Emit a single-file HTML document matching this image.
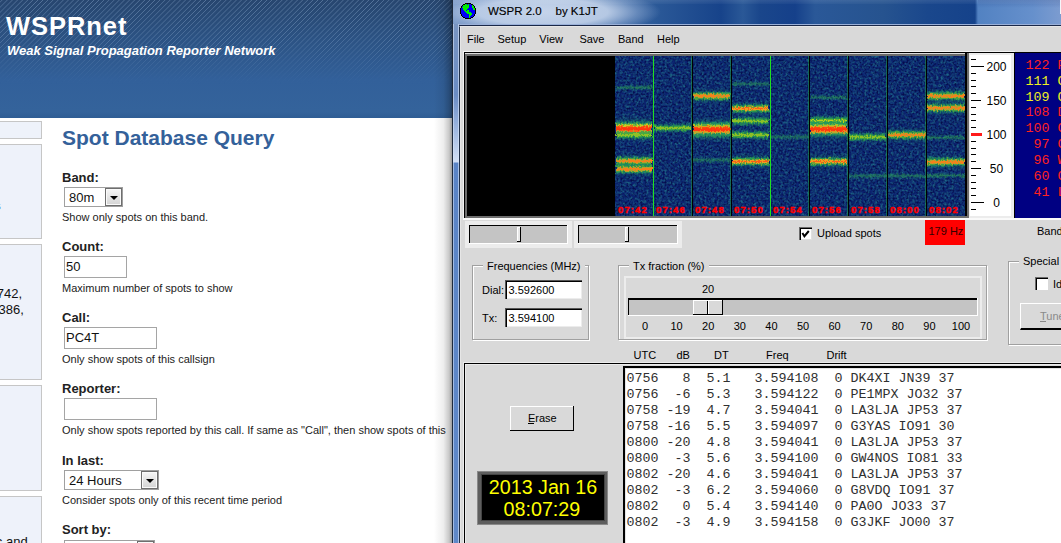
<!DOCTYPE html><html><head><meta charset="utf-8"><style>
*{margin:0;padding:0;box-sizing:border-box}
html,body{width:1061px;height:543px;overflow:hidden;background:#fff;font-family:"Liberation Sans",sans-serif}
.a{position:absolute;white-space:pre}
</style></head><body><div class="a" style="left:0px;top:0px;width:453px;height:543px;background:#fff"></div><div class="a" style="left:0px;top:0px;width:453px;height:118px;background:linear-gradient(#27466f 0px,#2c5384 40px,#32609a 80px,#34639b 112px,#2f5d94 118px)"></div><div class="a" style="left:0px;top:0px;width:453px;height:88px;background:repeating-linear-gradient(-45deg,rgba(150,180,215,0) 0px,rgba(150,180,215,0) 2.3px,rgba(150,180,215,.42) 2.9px,rgba(150,180,215,0) 3.6px);-webkit-mask-image:linear-gradient(#000 0px,rgba(0,0,0,.75) 40px,rgba(0,0,0,0) 84px)"></div><div class="a" style="left:6px;top:13.61px;font:normal bold 25.5px/25.5px 'Liberation Sans';color:#fff;letter-spacing:0.95px">WSPRnet</div><div class="a" style="left:7px;top:43.59px;font:italic bold 13px/13px 'Liberation Sans';color:#fff;">Weak Signal Propagation Reporter Network</div><div class="a" style="left:-5px;top:121px;width:47px;height:18px;background:#eef2fa;border:1px solid #c6c6c6"></div><div class="a" style="left:-5px;top:144px;width:47px;height:95px;background:#eef2fa;border:1px solid #c6c6c6"></div><div class="a" style="left:-5px;top:244px;width:47px;height:136px;background:#eef2fa;border:1px solid #c6c6c6"></div><div class="a" style="left:-5px;top:385px;width:47px;height:106px;background:#eef2fa;border:1px solid #c6c6c6"></div><div class="a" style="left:-5px;top:496px;width:47px;height:65px;background:#eef2fa;border:1px solid #c6c6c6"></div><div class="a" style="left:-6.5px;top:199.49px;font:normal bold 13px/13px 'Liberation Sans';color:#00208a;">s</div><div class="a" style="left:-3.3px;top:286.99px;font:normal normal 13px/13px 'Liberation Sans';color:#111;">742,</div><div class="a" style="left:-1.5px;top:302.99px;font:normal normal 13px/13px 'Liberation Sans';color:#111;">386,</div><div class="a" style="left:-4.2px;top:535.29px;font:normal normal 13px/13px 'Liberation Sans';color:#111;">c and</div><div class="a" style="left:62px;top:127.22px;font:normal bold 21px/21px 'Liberation Sans';color:#34619a;">Spot Database Query</div><div class="a" style="left:62px;top:170.99px;font:normal bold 13px/13px 'Liberation Sans';color:#222;">Band:</div><div class="a" style="left:62px;top:239.99px;font:normal bold 13px/13px 'Liberation Sans';color:#222;">Count:</div><div class="a" style="left:62px;top:310.99px;font:normal bold 13px/13px 'Liberation Sans';color:#222;">Call:</div><div class="a" style="left:62px;top:381.99px;font:normal bold 13px/13px 'Liberation Sans';color:#222;">Reporter:</div><div class="a" style="left:62px;top:453.99px;font:normal bold 13px/13px 'Liberation Sans';color:#222;">In last:</div><div class="a" style="left:62px;top:523.49px;font:normal bold 13px/13px 'Liberation Sans';color:#222;">Sort by:</div><div class="a" style="left:64px;top:187px;width:59px;height:20px;background:#fff;border:1px solid #a0a0a0"></div><div class="a" style="left:69px;top:190.99px;font:normal normal 13px/13px 'Liberation Sans';color:#111;">80m</div><div class="a" style="left:105px;top:188px;width:17px;height:18px;background:linear-gradient(#f6f6f6,#d4d4d4);border:1px solid #6e6e6e;box-shadow:inset 0 0 0 1px #fafafa"></div><div class="a" style="left:109.5px;top:196px;width:0;height:0;border-left:4px solid transparent;border-right:4px solid transparent;border-top:4.5px solid #000"></div><div class="a" style="left:62px;top:211.69px;font:normal normal 11px/11px 'Liberation Sans';color:#222;">Show only spots on this band.</div><div class="a" style="left:64px;top:256px;width:63px;height:22px;background:#fff;border:1px solid #a5a5a5"></div><div class="a" style="left:66px;top:260.19px;font:normal normal 13px/13px 'Liberation Sans';color:#111;">50</div><div class="a" style="left:62px;top:283.19px;font:normal normal 11px/11px 'Liberation Sans';color:#222;">Maximum number of spots to show</div><div class="a" style="left:64px;top:327px;width:93px;height:22px;background:#fff;border:1px solid #a5a5a5"></div><div class="a" style="left:66px;top:331.19px;font:normal normal 13px/13px 'Liberation Sans';color:#111;">PC4T</div><div class="a" style="left:62px;top:353.69px;font:normal normal 11px/11px 'Liberation Sans';color:#222;">Only show spots of this callsign</div><div class="a" style="left:64px;top:398px;width:93px;height:22px;background:#fff;border:1px solid #a5a5a5"></div><div class="a" style="left:62px;top:425.19px;font:normal normal 11px/11px 'Liberation Sans';color:#222;">Only show spots reported by this call. If same as &quot;Call&quot;, then show spots of this</div><div class="a" style="left:64px;top:470px;width:95px;height:20px;background:#fff;border:1px solid #a0a0a0"></div><div class="a" style="left:69px;top:473.99px;font:normal normal 13px/13px 'Liberation Sans';color:#111;">24 Hours</div><div class="a" style="left:141px;top:471px;width:17px;height:18px;background:linear-gradient(#f6f6f6,#d4d4d4);border:1px solid #6e6e6e;box-shadow:inset 0 0 0 1px #fafafa"></div><div class="a" style="left:145.5px;top:479px;width:0;height:0;border-left:4px solid transparent;border-right:4px solid transparent;border-top:4.5px solid #000"></div><div class="a" style="left:62px;top:495.19px;font:normal normal 11px/11px 'Liberation Sans';color:#222;">Consider spots only of this recent time period</div><div class="a" style="left:64px;top:540px;width:91px;height:20px;background:#fff;border:1px solid #a0a0a0"></div><div class="a" style="left:137px;top:541px;width:17px;height:18px;background:linear-gradient(#f6f6f6,#d4d4d4);border:1px solid #6e6e6e;box-shadow:inset 0 0 0 1px #fafafa"></div><div class="a" style="left:141.5px;top:549px;width:0;height:0;border-left:4px solid transparent;border-right:4px solid transparent;border-top:4.5px solid #000"></div><div class="a" style="left:434px;top:0px;width:19px;height:543px;background:linear-gradient(90deg,rgba(0,0,0,0),rgba(0,0,0,.07) 50%,rgba(0,0,0,.22) 80%,rgba(0,0,0,.45))"></div><div class="a" style="left:452px;top:0px;width:609px;height:543px;background:#1d2a3d"></div><div class="a" style="left:453px;top:0px;width:6px;height:543px;background:linear-gradient(#7e98c0 0px,#6a8cc4 95px,#90acda 120px,#d2e0f6 162px,#5a84c6 163px,#5f88c8 543px)"></div><div class="a" style="left:453px;top:0px;width:1px;height:543px;background:rgba(220,232,250,.55)"></div><div class="a" style="left:458px;top:0px;width:1px;height:543px;background:rgba(220,232,250,.6)"></div><div class="a" style="left:453px;top:0px;width:608px;height:24px;background:linear-gradient(90deg,#7393c2 0px,#6a8cc0 100px,#4a74ac 150px,#3a66a2 175px,#2a5897 205px,#17438a 268px,#2a5897 290px,#1a468b 307px,#15408a 342px,#2a5898 362px,#26538f 430px,#1a478c 475px,#15428a 522px,#5282c2 525px,#6690cc 580px,#7c9cd0 608px)"></div><div class="a" style="left:453px;top:0px;width:608px;height:24px;background:radial-gradient(ellipse 118px 24px at 90px 12px,rgba(200,214,236,.97) 0%,rgba(190,207,232,.92) 55%,rgba(160,184,220,.45) 80%,rgba(150,175,215,0) 100%)"></div><div class="a" style="left:453px;top:0px;width:608px;height:4px;background:linear-gradient(rgba(255,255,255,.10),rgba(255,255,255,.03))"></div><div class="a" style="left:978px;top:0px;width:83px;height:8px;background:linear-gradient(rgba(30,60,130,.25),rgba(30,60,130,0))"></div><div class="a" style="left:1060px;top:0px;width:1px;height:14px;background:#f4f6fa"></div><div class="a" style="left:459px;top:24px;width:602px;height:1px;background:#9ab0d8"></div><div class="a" style="left:459px;top:25px;width:602px;height:1px;background:#1a2848"></div><svg class="a" style="left:460px;top:3px" width="16" height="16" viewBox="0 0 16 16" shape-rendering="crispEdges"><path d="M5 0h1v1h-1zM6 0h1v1h-1zM7 0h1v1h-1zM8 0h1v1h-1zM9 0h1v1h-1zM10 0h1v1h-1zM3 1h1v1h-1zM4 1h1v1h-1zM11 1h1v1h-1zM12 1h1v1h-1zM2 2h1v1h-1zM13 2h1v1h-1zM1 3h1v1h-1zM14 3h1v1h-1zM1 4h1v1h-1zM14 4h1v1h-1zM0 5h1v1h-1zM15 5h1v1h-1zM0 6h1v1h-1zM15 6h1v1h-1zM0 7h1v1h-1zM15 7h1v1h-1zM0 8h1v1h-1zM15 8h1v1h-1zM0 9h1v1h-1zM15 9h1v1h-1zM0 10h1v1h-1zM15 10h1v1h-1zM1 11h1v1h-1zM14 11h1v1h-1zM1 12h1v1h-1zM14 12h1v1h-1zM2 13h1v1h-1zM13 13h1v1h-1zM3 14h1v1h-1zM4 14h1v1h-1zM11 14h1v1h-1zM12 14h1v1h-1zM5 15h1v1h-1zM6 15h1v1h-1zM7 15h1v1h-1zM8 15h1v1h-1zM9 15h1v1h-1zM10 15h1v1h-1z" fill="#000"/><path d="M5 1h1v1h-1zM6 1h1v1h-1zM8 1h1v1h-1zM3 2h1v1h-1zM4 2h1v1h-1zM5 2h1v1h-1zM6 2h1v1h-1zM7 2h1v1h-1zM8 2h1v1h-1zM12 2h1v1h-1zM3 3h1v1h-1zM4 3h1v1h-1zM5 3h1v1h-1zM6 3h1v1h-1zM7 3h1v1h-1zM8 3h1v1h-1zM12 3h1v1h-1zM13 3h1v1h-1zM2 4h1v1h-1zM3 4h1v1h-1zM4 4h1v1h-1zM5 4h1v1h-1zM6 4h1v1h-1zM7 4h1v1h-1zM8 4h1v1h-1zM12 4h1v1h-1zM13 4h1v1h-1zM3 5h1v1h-1zM4 5h1v1h-1zM5 5h1v1h-1zM6 5h1v1h-1zM7 5h1v1h-1zM13 5h1v1h-1zM14 5h1v1h-1zM3 6h1v1h-1zM4 6h1v1h-1zM5 6h1v1h-1zM6 6h1v1h-1zM13 6h1v1h-1zM14 6h1v1h-1zM4 7h1v1h-1zM5 7h1v1h-1zM7 7h1v1h-1zM8 7h1v1h-1zM5 8h1v1h-1zM6 8h1v1h-1zM7 8h1v1h-1zM8 8h1v1h-1zM6 9h1v1h-1zM7 9h1v1h-1zM8 9h1v1h-1zM9 9h1v1h-1zM10 9h1v1h-1zM7 10h1v1h-1zM8 10h1v1h-1zM9 10h1v1h-1zM10 10h1v1h-1zM11 10h1v1h-1zM9 11h1v1h-1zM10 11h1v1h-1zM11 11h1v1h-1zM9 12h1v1h-1zM10 12h1v1h-1zM9 13h1v1h-1zM9 14h1v1h-1z" fill="#00f000"/><path d="M7 1h1v1h-1zM9 1h1v1h-1zM10 1h1v1h-1zM9 2h1v1h-1zM10 2h1v1h-1zM11 2h1v1h-1zM2 3h1v1h-1zM9 3h1v1h-1zM10 3h1v1h-1zM11 3h1v1h-1zM9 4h1v1h-1zM10 4h1v1h-1zM11 4h1v1h-1zM1 5h1v1h-1zM2 5h1v1h-1zM8 5h1v1h-1zM9 5h1v1h-1zM10 5h1v1h-1zM11 5h1v1h-1zM12 5h1v1h-1zM1 6h1v1h-1zM2 6h1v1h-1zM7 6h1v1h-1zM8 6h1v1h-1zM9 6h1v1h-1zM10 6h1v1h-1zM11 6h1v1h-1zM12 6h1v1h-1zM1 7h1v1h-1zM2 7h1v1h-1zM3 7h1v1h-1zM6 7h1v1h-1zM9 7h1v1h-1zM10 7h1v1h-1zM11 7h1v1h-1zM12 7h1v1h-1zM13 7h1v1h-1zM14 7h1v1h-1zM1 8h1v1h-1zM2 8h1v1h-1zM3 8h1v1h-1zM4 8h1v1h-1zM9 8h1v1h-1zM10 8h1v1h-1zM11 8h1v1h-1zM12 8h1v1h-1zM13 8h1v1h-1zM14 8h1v1h-1zM1 9h1v1h-1zM2 9h1v1h-1zM3 9h1v1h-1zM4 9h1v1h-1zM5 9h1v1h-1zM11 9h1v1h-1zM12 9h1v1h-1zM13 9h1v1h-1zM14 9h1v1h-1zM1 10h1v1h-1zM2 10h1v1h-1zM3 10h1v1h-1zM4 10h1v1h-1zM5 10h1v1h-1zM6 10h1v1h-1zM12 10h1v1h-1zM13 10h1v1h-1zM14 10h1v1h-1zM2 11h1v1h-1zM3 11h1v1h-1zM4 11h1v1h-1zM5 11h1v1h-1zM6 11h1v1h-1zM7 11h1v1h-1zM8 11h1v1h-1zM12 11h1v1h-1zM13 11h1v1h-1zM2 12h1v1h-1zM3 12h1v1h-1zM4 12h1v1h-1zM5 12h1v1h-1zM6 12h1v1h-1zM7 12h1v1h-1zM8 12h1v1h-1zM11 12h1v1h-1zM12 12h1v1h-1zM13 12h1v1h-1zM3 13h1v1h-1zM4 13h1v1h-1zM5 13h1v1h-1zM6 13h1v1h-1zM7 13h1v1h-1zM8 13h1v1h-1zM10 13h1v1h-1zM11 13h1v1h-1zM12 13h1v1h-1zM5 14h1v1h-1zM6 14h1v1h-1zM7 14h1v1h-1zM8 14h1v1h-1zM10 14h1v1h-1z" fill="#0000f8"/></svg><div class="a" style="left:488px;top:5.76px;font:normal normal 11.5px/11.5px 'Liberation Sans';color:#000;-webkit-text-stroke:0.15px #000">WSPR 2.0</div><div class="a" style="left:555.5px;top:5.76px;font:normal normal 11.5px/11.5px 'Liberation Sans';color:#000;-webkit-text-stroke:0.15px #000">by K1JT</div><div class="a" style="left:459px;top:26px;width:602px;height:517px;background:#d9d9d9;border-left:1px solid #1f2f48;border-top:1px solid #e6e6e6"></div><div class="a" style="left:460px;top:26px;width:1px;height:517px;background:#e6e6e6"></div><div class="a" style="left:467px;top:34.19px;font:normal normal 11px/11px 'Liberation Sans';color:#000;">File</div><div class="a" style="left:497.5px;top:34.19px;font:normal normal 11px/11px 'Liberation Sans';color:#000;">Setup</div><div class="a" style="left:539.3px;top:34.19px;font:normal normal 11px/11px 'Liberation Sans';color:#000;">View</div><div class="a" style="left:579.4px;top:34.19px;font:normal normal 11px/11px 'Liberation Sans';color:#000;">Save</div><div class="a" style="left:618px;top:34.19px;font:normal normal 11px/11px 'Liberation Sans';color:#000;">Band</div><div class="a" style="left:657px;top:34.19px;font:normal normal 11px/11px 'Liberation Sans';color:#000;">Help</div><div class="a" style="left:463px;top:51px;width:552px;height:169px;background:#f2f2f2"></div><div class="a" style="left:464px;top:52px;width:551px;height:167px;background:#000"></div><div class="a" style="left:465px;top:53px;width:550px;height:166px;background:#dcdcdc"></div><div class="a" style="left:465px;top:54px;width:550px;height:165px;background:#6c6c6c"></div><div class="a" style="left:467px;top:56px;width:498px;height:160px;background:#000"></div><div class="a" style="left:965px;top:53px;width:2px;height:164px;background:#000"></div><div class="a" style="left:967px;top:53px;width:2px;height:164px;background:#6e6e6e"></div><div class="a" style="left:466px;top:216px;width:503px;height:2px;background:#6e6e6e"></div><div class="a" style="left:463px;top:218px;width:598px;height:2px;background:#fafafa"></div><div class="a" style="left:969px;top:53px;width:45px;height:165px;background:#ececec"></div><div class="a" style="left:970px;top:55px;width:41px;height:161px;background:#fff"></div><div class="a" style="left:1014px;top:52px;width:47px;height:166px;background:#000"></div><div class="a" style="left:1015px;top:53px;width:46px;height:165px;background:#000082"></div><svg class="a" style="left:615px;top:56px" width="350" height="160" viewBox="0 0 350 160"><defs>
<filter id="nz" x="0" y="0" width="100%" height="100%" color-interpolation-filters="sRGB"><feTurbulence type="fractalNoise" baseFrequency="0.38" numOctaves="2" seed="3"/><feColorMatrix type="matrix" values="0 0 0 0 0.11  0 0 0 0 0.40  0 0 0 0 0.52  2.3 0 0 0 -0.88"/></filter>
<filter id="nz2" x="0" y="0" width="100%" height="100%" color-interpolation-filters="sRGB"><feTurbulence type="fractalNoise" baseFrequency="0.5" numOctaves="1" seed="21"/><feColorMatrix type="matrix" values="0 0 0 0 0.02  0 0 0 0 0.05  0 0 0 0 0.30  3 0 0 0 -1.3"/></filter>
<filter id="sg" x="-2%" y="-50%" width="104%" height="200%" color-interpolation-filters="sRGB"><feTurbulence type="fractalNoise" baseFrequency="0.6 0.35" numOctaves="2" seed="5" result="t"/><feDisplacementMap in="SourceGraphic" in2="t" scale="5" xChannelSelector="R" yChannelSelector="G"/></filter>
<linearGradient id="gr" x1="0" y1="0" x2="0" y2="1"><stop offset="0" stop-color="#1a9070" stop-opacity="0"/><stop offset=".18" stop-color="#28a858" stop-opacity=".7"/><stop offset=".32" stop-color="#c8d020"/><stop offset=".42" stop-color="#ff4010"/><stop offset=".58" stop-color="#ff3010"/><stop offset=".68" stop-color="#e8b020"/><stop offset=".82" stop-color="#28a858" stop-opacity=".7"/><stop offset="1" stop-color="#1a9070" stop-opacity="0"/></linearGradient>
<linearGradient id="go" x1="0" y1="0" x2="0" y2="1"><stop offset="0" stop-color="#1a9070" stop-opacity="0"/><stop offset=".22" stop-color="#30b040" stop-opacity=".8"/><stop offset=".4" stop-color="#f0a020"/><stop offset=".5" stop-color="#f86018"/><stop offset=".6" stop-color="#f0a020"/><stop offset=".78" stop-color="#30b040" stop-opacity=".8"/><stop offset="1" stop-color="#1a9070" stop-opacity="0"/></linearGradient>
<linearGradient id="gy" x1="0" y1="0" x2="0" y2="1"><stop offset="0" stop-color="#1a9070" stop-opacity="0"/><stop offset=".3" stop-color="#30a840" stop-opacity=".8"/><stop offset=".5" stop-color="#b8d018"/><stop offset=".7" stop-color="#30a840" stop-opacity=".8"/><stop offset="1" stop-color="#1a9070" stop-opacity="0"/></linearGradient>
<linearGradient id="glow" x1="0" y1="0" x2="0" y2="1"><stop offset="0" stop-color="#1a8a70" stop-opacity="0"/><stop offset=".5" stop-color="#22a060" stop-opacity=".55"/><stop offset="1" stop-color="#1a8a70" stop-opacity="0"/></linearGradient>
<linearGradient id="gg" x1="0" y1="0" x2="0" y2="1"><stop offset="0" stop-color="#1a9070" stop-opacity="0"/><stop offset=".5" stop-color="#30a850" stop-opacity=".6"/><stop offset="1" stop-color="#1a9070" stop-opacity="0"/></linearGradient>
</defs><rect width="350" height="160" fill="#0c2572"/><rect width="350" height="160" filter="url(#nz)"/><rect width="350" height="160" filter="url(#nz2)"/><g filter="url(#sg)"><rect x="1" y="59.5" width="36" height="26" fill="url(#glow)"/><rect x="1" y="73.0" width="36" height="12" fill="url(#glow)"/><rect x="1" y="97.0" width="36" height="16" fill="url(#glow)"/><rect x="1" y="105.0" width="36" height="16" fill="url(#glow)"/><rect x="39" y="66.0" width="37" height="12" fill="url(#glow)"/><rect x="78" y="32.0" width="37" height="16" fill="url(#glow)"/><rect x="78" y="60.0" width="37" height="26" fill="url(#glow)"/><rect x="117" y="44.5" width="37" height="16" fill="url(#glow)"/><rect x="117" y="59.0" width="37" height="12" fill="url(#glow)"/><rect x="117" y="73.0" width="37" height="12" fill="url(#glow)"/><rect x="117" y="97.5" width="37" height="16" fill="url(#glow)"/><rect x="195" y="58.5" width="37" height="12" fill="url(#glow)"/><rect x="195" y="60.0" width="37" height="26" fill="url(#glow)"/><rect x="195" y="97.5" width="37" height="16" fill="url(#glow)"/><rect x="234" y="75.0" width="37" height="12" fill="url(#glow)"/><rect x="273" y="71.0" width="37" height="16" fill="url(#glow)"/><rect x="312" y="32.0" width="38" height="16" fill="url(#glow)"/><rect x="312" y="44.0" width="38" height="16" fill="url(#glow)"/><rect x="312" y="98.0" width="38" height="16" fill="url(#glow)"/><rect x="1" y="28.5" width="36" height="6" fill="url(#gg)"/><rect x="1" y="64.0" width="36" height="17" fill="url(#gr)"/><rect x="1" y="74.5" width="36" height="9" fill="url(#gy)"/><rect x="1" y="100.0" width="36" height="10" fill="url(#go)"/><rect x="1" y="108.0" width="36" height="10" fill="url(#go)"/><rect x="39" y="67.5" width="37" height="9" fill="url(#gy)"/><rect x="78" y="35.0" width="37" height="10" fill="url(#go)"/><rect x="78" y="64.5" width="37" height="17" fill="url(#gr)"/><rect x="78" y="77.0" width="37" height="6" fill="url(#gg)"/><rect x="78" y="101.0" width="37" height="6" fill="url(#gg)"/><rect x="117" y="25.0" width="37" height="6" fill="url(#gg)"/><rect x="117" y="47.5" width="37" height="10" fill="url(#go)"/><rect x="117" y="60.5" width="37" height="9" fill="url(#gy)"/><rect x="117" y="74.5" width="37" height="9" fill="url(#gy)"/><rect x="117" y="100.5" width="37" height="10" fill="url(#go)"/><rect x="156" y="78.0" width="37" height="6" fill="url(#gg)"/><rect x="195" y="38.5" width="37" height="6" fill="url(#gg)"/><rect x="195" y="60.0" width="37" height="9" fill="url(#gy)"/><rect x="195" y="64.5" width="37" height="17" fill="url(#gr)"/><rect x="195" y="100.5" width="37" height="10" fill="url(#go)"/><rect x="234" y="76.5" width="37" height="9" fill="url(#gy)"/><rect x="234" y="117.0" width="37" height="6" fill="url(#gg)"/><rect x="273" y="74.0" width="37" height="10" fill="url(#go)"/><rect x="273" y="117.0" width="37" height="6" fill="url(#gg)"/><rect x="312" y="35.0" width="38" height="10" fill="url(#go)"/><rect x="312" y="47.0" width="38" height="10" fill="url(#go)"/><rect x="312" y="78.5" width="38" height="6" fill="url(#gg)"/><rect x="312" y="101.0" width="38" height="10" fill="url(#go)"/><rect x="312" y="116.5" width="38" height="6" fill="url(#gg)"/></g><rect x="38" y="0" width="1" height="160" fill="#20e020"/><rect x="76" y="0" width="1" height="160" fill="#20b040" opacity=".45"/><rect x="77" y="0" width="1" height="160" fill="#000"/><rect x="115" y="0" width="1" height="160" fill="#20b040" opacity=".45"/><rect x="116" y="0" width="1" height="160" fill="#000"/><rect x="155" y="0" width="1" height="160" fill="#20e020"/><rect x="193" y="0" width="1" height="160" fill="#20b040" opacity=".45"/><rect x="194" y="0" width="1" height="160" fill="#000"/><rect x="232" y="0" width="1" height="160" fill="#20b040" opacity=".45"/><rect x="233" y="0" width="1" height="160" fill="#000"/><rect x="271" y="0" width="1" height="160" fill="#20b040" opacity=".45"/><rect x="272" y="0" width="1" height="160" fill="#000"/><rect x="310" y="0" width="1" height="160" fill="#20b040" opacity=".45"/><rect x="311" y="0" width="1" height="160" fill="#000"/></svg><div class="a" style="left:618px;top:205.26px;font:normal bold 9.5px/9.5px 'Liberation Sans';color:#ff0000;letter-spacing:1.1px;-webkit-text-stroke:0.45px #ff0000">07:42</div><div class="a" style="left:656px;top:205.26px;font:normal bold 9.5px/9.5px 'Liberation Sans';color:#ff0000;letter-spacing:1.1px;-webkit-text-stroke:0.45px #ff0000">07:46</div><div class="a" style="left:695px;top:205.26px;font:normal bold 9.5px/9.5px 'Liberation Sans';color:#ff0000;letter-spacing:1.1px;-webkit-text-stroke:0.45px #ff0000">07:48</div><div class="a" style="left:734px;top:205.26px;font:normal bold 9.5px/9.5px 'Liberation Sans';color:#ff0000;letter-spacing:1.1px;-webkit-text-stroke:0.45px #ff0000">07:50</div><div class="a" style="left:773px;top:205.26px;font:normal bold 9.5px/9.5px 'Liberation Sans';color:#ff0000;letter-spacing:1.1px;-webkit-text-stroke:0.45px #ff0000">07:54</div><div class="a" style="left:812px;top:205.26px;font:normal bold 9.5px/9.5px 'Liberation Sans';color:#ff0000;letter-spacing:1.1px;-webkit-text-stroke:0.45px #ff0000">07:56</div><div class="a" style="left:851px;top:205.26px;font:normal bold 9.5px/9.5px 'Liberation Sans';color:#ff0000;letter-spacing:1.1px;-webkit-text-stroke:0.45px #ff0000">07:58</div><div class="a" style="left:890px;top:205.26px;font:normal bold 9.5px/9.5px 'Liberation Sans';color:#ff0000;letter-spacing:1.1px;-webkit-text-stroke:0.45px #ff0000">08:00</div><div class="a" style="left:929px;top:205.26px;font:normal bold 9.5px/9.5px 'Liberation Sans';color:#ff0000;letter-spacing:1.1px;-webkit-text-stroke:0.45px #ff0000">08:02</div><div class="a" style="left:971px;top:209px;width:5px;height:1px;background:#000"></div><div class="a" style="left:971px;top:202px;width:13px;height:1px;background:#000"></div><div class="a" style="left:971px;top:195px;width:5px;height:1px;background:#000"></div><div class="a" style="left:971px;top:188px;width:5px;height:1px;background:#000"></div><div class="a" style="left:971px;top:182px;width:5px;height:1px;background:#000"></div><div class="a" style="left:971px;top:175px;width:5px;height:1px;background:#000"></div><div class="a" style="left:971px;top:168px;width:10px;height:1px;background:#000"></div><div class="a" style="left:971px;top:161px;width:5px;height:1px;background:#000"></div><div class="a" style="left:971px;top:154px;width:5px;height:1px;background:#000"></div><div class="a" style="left:971px;top:148px;width:5px;height:1px;background:#000"></div><div class="a" style="left:971px;top:141px;width:5px;height:1px;background:#000"></div><div class="a" style="left:971px;top:133px;width:11px;height:3px;background:#ff1a1a"></div><div class="a" style="left:971px;top:127px;width:5px;height:1px;background:#000"></div><div class="a" style="left:971px;top:120px;width:5px;height:1px;background:#000"></div><div class="a" style="left:971px;top:114px;width:5px;height:1px;background:#000"></div><div class="a" style="left:971px;top:107px;width:5px;height:1px;background:#000"></div><div class="a" style="left:971px;top:100px;width:10px;height:1px;background:#000"></div><div class="a" style="left:971px;top:93px;width:5px;height:1px;background:#000"></div><div class="a" style="left:971px;top:86px;width:5px;height:1px;background:#000"></div><div class="a" style="left:971px;top:80px;width:5px;height:1px;background:#000"></div><div class="a" style="left:971px;top:73px;width:5px;height:1px;background:#000"></div><div class="a" style="left:971px;top:66px;width:13px;height:1px;background:#000"></div><div class="a" style="left:971px;top:59px;width:5px;height:1px;background:#000"></div><div class="a" style="left:986.5px;top:61.44px;font:normal normal 12px/12px 'Liberation Sans';color:#000;">200</div><div class="a" style="left:986.5px;top:95.44px;font:normal normal 12px/12px 'Liberation Sans';color:#000;">150</div><div class="a" style="left:986.5px;top:129.44px;font:normal normal 12px/12px 'Liberation Sans';color:#000;">100</div><div class="a" style="left:989.8px;top:163.44px;font:normal normal 12px/12px 'Liberation Sans';color:#000;">50</div><div class="a" style="left:993.15px;top:197.44px;font:normal normal 12px/12px 'Liberation Sans';color:#000;">0</div><div class="a" style="left:1025.5px;top:58.79px;font:normal normal 13.33px/13.33px 'Liberation Mono';color:#ff2020;">122 P</div><div class="a" style="left:1025.5px;top:74.69px;font:normal normal 13.33px/13.33px 'Liberation Mono';color:#f0f020;">111 G</div><div class="a" style="left:1025.5px;top:90.59px;font:normal normal 13.33px/13.33px 'Liberation Mono';color:#f0f020;">109 G</div><div class="a" style="left:1025.5px;top:106.49px;font:normal normal 13.33px/13.33px 'Liberation Mono';color:#ff2020;">108 D</div><div class="a" style="left:1025.5px;top:122.39px;font:normal normal 13.33px/13.33px 'Liberation Mono';color:#ff2020;">100 G</div><div class="a" style="left:1025.5px;top:138.29px;font:normal normal 13.33px/13.33px 'Liberation Mono';color:#ff2020;"> 97 G</div><div class="a" style="left:1025.5px;top:154.19px;font:normal normal 13.33px/13.33px 'Liberation Mono';color:#ff2020;"> 96 W</div><div class="a" style="left:1025.5px;top:170.09px;font:normal normal 13.33px/13.33px 'Liberation Mono';color:#ff2020;"> 60 G</div><div class="a" style="left:1025.5px;top:185.99px;font:normal normal 13.33px/13.33px 'Liberation Mono';color:#ff2020;"> 41 L</div><div class="a" style="left:465px;top:221px;width:107px;height:27px;background:#ececec"></div><div class="a" style="left:469px;top:225px;width:99px;height:19px;background:#fff"></div><div class="a" style="left:469px;top:225px;width:98px;height:18px;background:#000"></div><div class="a" style="left:470px;top:226px;width:97px;height:17px;background:#c4c4c4"></div><div class="a" style="left:517px;top:227px;width:4px;height:15px;background:#000"></div><div class="a" style="left:517px;top:227px;width:3px;height:14px;background:#fff"></div><div class="a" style="left:518px;top:228px;width:2px;height:13px;background:#e8e8e8"></div><div class="a" style="left:574px;top:221px;width:108px;height:27px;background:#ececec"></div><div class="a" style="left:578px;top:225px;width:100px;height:19px;background:#fff"></div><div class="a" style="left:578px;top:225px;width:99px;height:18px;background:#000"></div><div class="a" style="left:579px;top:226px;width:98px;height:17px;background:#c4c4c4"></div><div class="a" style="left:625px;top:227px;width:4px;height:15px;background:#000"></div><div class="a" style="left:625px;top:227px;width:3px;height:14px;background:#fff"></div><div class="a" style="left:626px;top:228px;width:2px;height:13px;background:#e8e8e8"></div><div class="a" style="left:799px;top:227px;width:13px;height:13px;background:#fff;border-left:1px solid #6a6a6a;border-top:1px solid #6a6a6a;box-shadow:inset 1px 1px 0 #000,inset -1px -1px 0 #e0e0e0"></div><svg class="a" style="left:801px;top:229px" width="10" height="10" viewBox="0 0 10 10"><path d="M1.4 4.0 L3.4 7.2 L7.8 2.0" stroke="#000" stroke-width="2" fill="none"/></svg><div class="a" style="left:817px;top:228.19px;font:normal normal 11px/11px 'Liberation Sans';color:#000;">Upload spots</div><div class="a" style="left:925px;top:220px;width:40px;height:25px;background:#ff0000"></div><div class="a" style="left:928.5px;top:226.19px;font:normal normal 11px/11px 'Liberation Sans';color:#300;">179 Hz</div><div class="a" style="left:1037px;top:226.19px;font:normal normal 11px/11px 'Liberation Sans';color:#000;">Band</div><div class="a" style="left:472px;top:265px;width:117px;height:75px;border:1px solid #a0a0a0;box-shadow:1px 1px 0 #fff, inset 1px 1px 0 #fff"></div><div class="a" style="left:483px;top:260px;height:12px;background:#d9d9d9;font:11px/12px 'Liberation Sans';padding:0 4px;color:#000">Frequencies (MHz)</div><div class="a" style="left:618px;top:265px;width:369px;height:75px;border:1px solid #a0a0a0;box-shadow:1px 1px 0 #fff, inset 1px 1px 0 #fff"></div><div class="a" style="left:629px;top:260px;height:12px;background:#d9d9d9;font:11px/12px 'Liberation Sans';padding:0 4px;color:#000">Tx fraction (%)</div><div class="a" style="left:1008px;top:261px;width:72px;height:84px;border:1px solid #a0a0a0;box-shadow:1px 1px 0 #fff, inset 1px 1px 0 #fff"></div><div class="a" style="left:1019px;top:254.5px;height:12px;background:#d9d9d9;font:11px/12px 'Liberation Sans';padding:0 4px;color:#000">Special</div><div class="a" style="left:482px;top:284.69px;font:normal normal 11px/11px 'Liberation Sans';color:#000;">Dial:</div><div class="a" style="left:482px;top:312.69px;font:normal normal 11px/11px 'Liberation Sans';color:#000;">Tx:</div><div class="a" style="left:505px;top:280px;width:77px;height:19px;background:#fff;border-left:1px solid #555;border-top:1px solid #555;box-shadow:inset 1px 1px 0 #000,inset -1px -1px 0 #ececec"></div><div class="a" style="left:508.5px;top:284.69px;font:normal normal 11px/11px 'Liberation Sans';color:#000;">3.592600</div><div class="a" style="left:505px;top:308px;width:77px;height:19px;background:#fff;border-left:1px solid #555;border-top:1px solid #555;box-shadow:inset 1px 1px 0 #000,inset -1px -1px 0 #ececec"></div><div class="a" style="left:508.5px;top:312.69px;font:normal normal 11px/11px 'Liberation Sans';color:#000;">3.594100</div><div class="a" style="left:624px;top:276px;width:358px;height:63px;background:#ececec"></div><div class="a" style="left:626px;top:278px;width:354px;height:59px;background:#d9d9d9"></div><div class="a" style="left:702px;top:284.19px;font:normal normal 11px/11px 'Liberation Sans';color:#000;">20</div><div class="a" style="left:628px;top:298px;width:350px;height:18px;background:#fff"></div><div class="a" style="left:628px;top:298px;width:349px;height:17px;background:#000"></div><div class="a" style="left:629px;top:300px;width:348px;height:15px;background:#c4c4c4"></div><div class="a" style="left:693px;top:300px;width:30px;height:15px;background:#000"></div><div class="a" style="left:693px;top:300px;width:29px;height:14px;background:#fff"></div><div class="a" style="left:694px;top:301px;width:28px;height:13px;background:#d9d9d9"></div><div class="a" style="left:707px;top:301px;width:1px;height:14px;background:#000"></div><div class="a" style="left:708px;top:301px;width:1px;height:13px;background:#fff"></div><div class="a" style="left:641.95px;top:320.69px;font:normal normal 11px/11px 'Liberation Sans';color:#000;">0</div><div class="a" style="left:670.5px;top:320.69px;font:normal normal 11px/11px 'Liberation Sans';color:#000;">10</div><div class="a" style="left:702.1px;top:320.69px;font:normal normal 11px/11px 'Liberation Sans';color:#000;">20</div><div class="a" style="left:733.6999999999999px;top:320.69px;font:normal normal 11px/11px 'Liberation Sans';color:#000;">30</div><div class="a" style="left:765.3px;top:320.69px;font:normal normal 11px/11px 'Liberation Sans';color:#000;">40</div><div class="a" style="left:796.9px;top:320.69px;font:normal normal 11px/11px 'Liberation Sans';color:#000;">50</div><div class="a" style="left:828.5px;top:320.69px;font:normal normal 11px/11px 'Liberation Sans';color:#000;">60</div><div class="a" style="left:860.1px;top:320.69px;font:normal normal 11px/11px 'Liberation Sans';color:#000;">70</div><div class="a" style="left:891.6999999999999px;top:320.69px;font:normal normal 11px/11px 'Liberation Sans';color:#000;">80</div><div class="a" style="left:923.3000000000001px;top:320.69px;font:normal normal 11px/11px 'Liberation Sans';color:#000;">90</div><div class="a" style="left:951.8px;top:320.69px;font:normal normal 11px/11px 'Liberation Sans';color:#000;">100</div><div class="a" style="left:1035px;top:277px;width:13px;height:13px;background:#fff;border-left:1px solid #6a6a6a;border-top:1px solid #6a6a6a;box-shadow:inset 1px 1px 0 #000"></div><div class="a" style="left:1053px;top:278.69px;font:normal normal 11px/11px 'Liberation Sans';color:#000;">Id</div><div class="a" style="left:1020px;top:303px;width:60px;height:27px;background:#d9d9d9;border-top:1px solid #fff;border-left:1px solid #fff;border-bottom:2px solid #000"></div><div class="a" style="left:1040px;top:311.19px;font:normal normal 11px/11px 'Liberation Sans';color:#8a8a8a;">Tune</div><div class="a" style="left:1040px;top:321px;width:6px;height:1px;background:#8a8a8a"></div><div class="a" style="left:633.5px;top:349.69px;font:normal normal 11px/11px 'Liberation Sans';color:#000;">UTC</div><div class="a" style="left:676.5px;top:349.69px;font:normal normal 11px/11px 'Liberation Sans';color:#000;">dB</div><div class="a" style="left:714px;top:349.69px;font:normal normal 11px/11px 'Liberation Sans';color:#000;">DT</div><div class="a" style="left:766px;top:349.69px;font:normal normal 11px/11px 'Liberation Sans';color:#000;">Freq</div><div class="a" style="left:826.5px;top:349.69px;font:normal normal 11px/11px 'Liberation Sans';color:#000;">Drift</div><div class="a" style="left:463px;top:362px;width:598px;height:181px;background:#ececec"></div><div class="a" style="left:464px;top:363px;width:597px;height:180px;background:#000"></div><div class="a" style="left:465px;top:364px;width:596px;height:179px;background:#d9d9d9;border-left:1px solid #ececec;border-top:1px solid #ececec"></div><div class="a" style="left:510px;top:406px;width:64px;height:25px;background:#000"></div><div class="a" style="left:510px;top:406px;width:63px;height:24px;background:#fff"></div><div class="a" style="left:511px;top:407px;width:62px;height:23px;background:#d9d9d9"></div><div class="a" style="left:528px;top:413.19px;font:normal normal 11px/11px 'Liberation Sans';color:#000;">Erase</div><div class="a" style="left:528px;top:423px;width:6px;height:1px;background:#000"></div><div class="a" style="left:477px;top:471px;width:131px;height:54px;background:#5e5e5e;border:1px solid #8a8a8a"></div><div class="a" style="left:481px;top:474px;width:124px;height:47px;background:#000;border:1px solid #444"></div><div class="a" style="left:488.8px;top:477.72px;font:normal normal 19.7px/19.7px 'Liberation Sans';color:#ffff00;">2013 Jan 16</div><div class="a" style="left:503.6px;top:500.32px;font:normal normal 19.7px/19.7px 'Liberation Sans';color:#ffff00;">08:07:29</div><div class="a" style="left:623px;top:366px;width:438px;height:177px;background:#fff;border-left:2px solid #000;border-top:2px solid #000;box-shadow:inset 1px 1px 0 #e4e4e4"></div><div class="a" style="left:626.5px;top:371.79px;font:normal normal 13.33px/13.33px 'Liberation Mono';color:#303030;">0756   8  5.1   3.594108  0 DK4XI JN39 37</div><div class="a" style="left:626.5px;top:387.79px;font:normal normal 13.33px/13.33px 'Liberation Mono';color:#303030;">0756  -6  5.3   3.594122  0 PE1MPX JO32 37</div><div class="a" style="left:626.5px;top:403.79px;font:normal normal 13.33px/13.33px 'Liberation Mono';color:#303030;">0758 -19  4.7   3.594041  0 LA3LJA JP53 37</div><div class="a" style="left:626.5px;top:419.79px;font:normal normal 13.33px/13.33px 'Liberation Mono';color:#303030;">0758 -16  5.5   3.594097  0 G3YAS IO91 30</div><div class="a" style="left:626.5px;top:435.79px;font:normal normal 13.33px/13.33px 'Liberation Mono';color:#303030;">0800 -20  4.8   3.594041  0 LA3LJA JP53 37</div><div class="a" style="left:626.5px;top:451.79px;font:normal normal 13.33px/13.33px 'Liberation Mono';color:#303030;">0800  -3  5.6   3.594100  0 GW4NOS IO81 33</div><div class="a" style="left:626.5px;top:467.79px;font:normal normal 13.33px/13.33px 'Liberation Mono';color:#303030;">0802 -20  4.6   3.594041  0 LA3LJA JP53 37</div><div class="a" style="left:626.5px;top:483.79px;font:normal normal 13.33px/13.33px 'Liberation Mono';color:#303030;">0802  -3  6.2   3.594060  0 G8VDQ IO91 37</div><div class="a" style="left:626.5px;top:499.79px;font:normal normal 13.33px/13.33px 'Liberation Mono';color:#303030;">0802   0  5.4   3.594140  0 PA0O JO33 37</div><div class="a" style="left:626.5px;top:515.79px;font:normal normal 13.33px/13.33px 'Liberation Mono';color:#303030;">0802  -3  4.9   3.594158  0 G3JKF JO00 37</div></body></html>
